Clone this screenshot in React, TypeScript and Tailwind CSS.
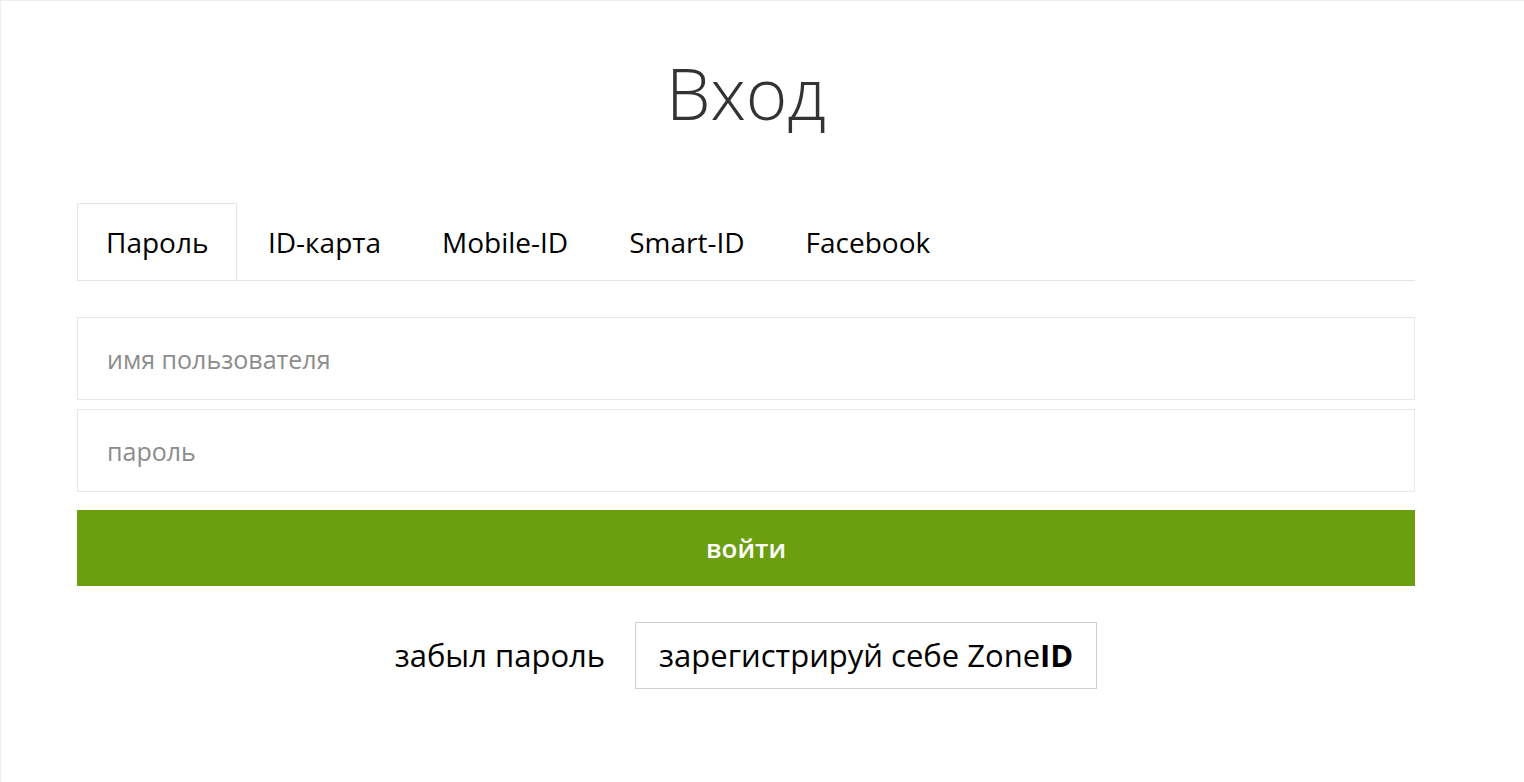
import { useState } from "react";

const tabs = ["Пароль", "ID-карта", "Mobile-ID", "Smart-ID", "Facebook"];

export default function App() {
  const [active, setActive] = useState(0);

  return (
    <div className="w-full min-h-screen bg-white border-t border-l border-[#eeeeee] font-['Open_Sans',sans-serif]">
      <div className="ml-[76px] w-[1338px] pt-[47px]">
        <h1 className="text-center text-[71px] font-light text-[#333333] leading-[90px]">Вход</h1>

        <ul className="flex mt-[65px] border-b border-[#e5e5e5]">
          {tabs.map((t, i) => (
            <li key={t}>
              <button
                onClick={() => setActive(i)}
                className={
                  i === active
                    ? "h-[77px] px-[28px] text-[28px] text-black bg-white border border-b-0 border-[#e5e5e5] -mb-px"
                    : "h-[77px] px-[29.5px] text-[28px] text-black border border-transparent"
                }
              >
                {t}
              </button>
            </li>
          ))}
        </ul>

        <form className="flex flex-col mt-[36px]" onSubmit={(e) => e.preventDefault()}>
          <input
            type="text"
            placeholder="имя пользователя"
            className="h-[83px] border border-[#e8e8e8] px-[29px] text-[25px] placeholder:text-[#8c8c8c] outline-none"
          />
          <input
            type="password"
            placeholder="пароль"
            className="h-[83px] mt-[9px] border border-[#e8e8e8] px-[29px] text-[25px] placeholder:text-[#8c8c8c] outline-none"
          />
          <button type="submit" className="h-[76px] mt-[18px] bg-[#6c9f10] text-white text-[26px] font-semibold">
            войти
          </button>
        </form>

        <div className="flex items-center justify-center gap-[30px] mt-[36px]">
          <a href="#" className="text-[31px] text-black">забыл пароль</a>
          <a href="#" className="h-[67px] px-[23px] flex items-center border border-[#d0d0d0] text-[31px] text-black">
            зарегистрируй себе Zone<b className="font-bold">ID</b>
          </a>
        </div>
      </div>
    </div>
  );
}
